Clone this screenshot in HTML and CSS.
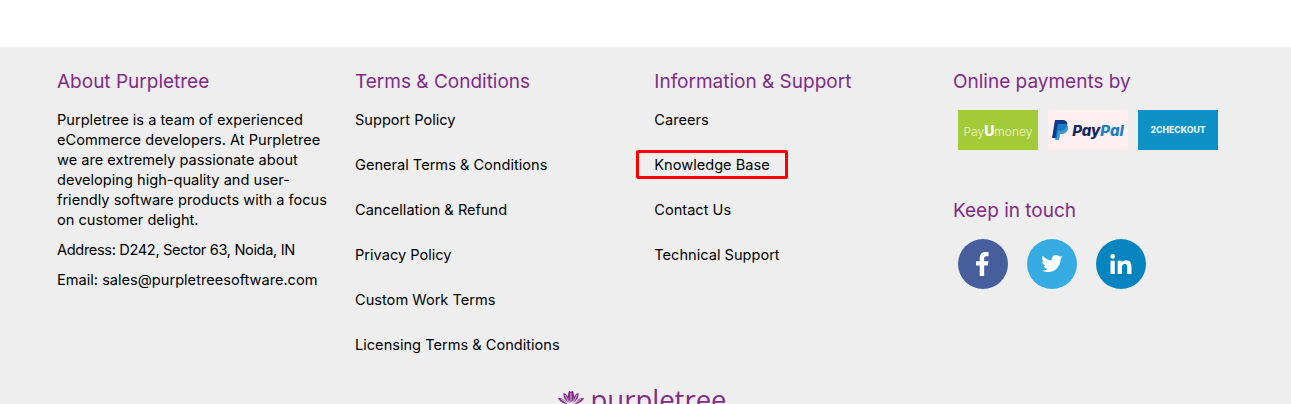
FILE: index.html
```html
<!DOCTYPE html>
<html>
<head>
  <meta charset="utf-8">
  <meta name="viewport" content="width=device-width">
  <title>Purpletree footer</title>
  <link rel="stylesheet" href="styles.css">
</head>
<body>
  <div class="top-gap"></div>
  <footer class="footer">
    <div class="columns">
      <div class="col">
        <h4 class="col-title">About Purpletree</h4>
        <p class="about">Purpletree is a team of experienced eCommerce developers. At Purpletree we are extremely passionate about developing high-quality and user-friendly software products with a focus on customer delight.</p>
        <p class="about address">Address: D242, Sector 63, Noida, IN</p>
        <p class="about">Email: sales@purpletreesoftware.com</p>
      </div>
      <div class="col">
        <h4 class="col-title">Terms &amp; Conditions</h4>
        <ul class="links">
          <li><a href="#">Support Policy</a></li>
          <li><a href="#">General Terms &amp; Conditions</a></li>
          <li><a href="#">Cancellation &amp; Refund</a></li>
          <li><a href="#">Privacy Policy</a></li>
          <li><a href="#">Custom Work Terms</a></li>
          <li><a href="#">Licensing Terms &amp; Conditions</a></li>
        </ul>
      </div>
      <div class="col">
        <h4 class="col-title">Information &amp; Support</h4>
        <ul class="links">
          <li><a href="#">Careers</a></li>
          <li><a href="#" class="marked">Knowledge Base</a></li>
          <li><a href="#">Contact Us</a></li>
          <li><a href="#">Technical Support</a></li>
        </ul>
      </div>
      <div class="col">
        <h4 class="col-title">Online payments by</h4>
        <div class="pay-row">
          <div class="pay pay-payu"><span>Pay<b>U</b>money</span></div>
          <div class="pay pay-paypal">
            <svg width="17" height="20" viewBox="0 0 17 20"><path fill="#0a3a8c" d="M3 0h7c4 0 6 2 5 5.500C14 9.500 11 11 8 11H6l-1 7H0z"/><path fill="#1b8ad0" opacity=".85" d="M6 4h6c3 0 4.500 2 4 5-.7 3.500-3.500 5-6 5H8l-1 6H3z"/></svg>
            <span><i class="pp-dark">Pay</i><i class="pp-light">Pal</i></span>
          </div>
          <div class="pay pay-2co"><span>2CHECKOUT</span></div>
        </div>
        <h4 class="col-title touch-title">Keep in touch</h4>
        <div class="social-row">
          <a href="#" class="social fb">
            <svg width="13" height="24" viewBox="0 0 14 26"><path fill="#fff" d="M4 26V14.500H0V10h4V6.500C4 2.500 6.400 0 10 0c1.700 0 3 .1 3.500.2v4.300h-2.400c-1.900 0-2.300.9-2.300 2.300V10h4.600l-.6 4.500h-4V26z"/></svg>
          </a>
          <a href="#" class="social tw">
            <svg width="22" height="18" viewBox="0 0 24 20"><path fill="#fff" d="M24 2.400c-.9.400-1.800.7-2.800.8 1-.6 1.800-1.600 2.200-2.700-1 .6-2 1-3.100 1.200C19.300.7 18 0 16.500 0c-2.700 0-4.900 2.200-4.900 4.900 0 .4 0 .8.100 1.100C7.600 5.800 4 3.900 1.700.9c-.4.700-.7 1.600-.7 2.500 0 1.700.9 3.200 2.200 4.100-.8 0-1.600-.2-2.200-.6v.1c0 2.400 1.700 4.400 3.900 4.800-.4.100-.8.200-1.300.2-.3 0-.6 0-.9-.1.600 2 2.400 3.400 4.600 3.400-1.700 1.300-3.800 2.100-6.100 2.100-.4 0-.8 0-1.200-.1C2.200 18.200 4.800 19 7.500 19c9.100 0 14-7.500 14-14v-.6c1-.7 1.800-1.500 2.500-2z"/></svg>
          </a>
          <a href="#" class="social in">
            <svg width="22" height="20" viewBox="0 0 22 21"><path fill="#fff" d="M0 7h4.500v14H0zM2.250 0a2.500 2.500 0 1 1 0 5 2.500 2.500 0 0 1 0-5zM7.500 7h4.300v1.900c.7-1.200 2.300-2.300 4.600-2.300 4.500 0 5.600 2.900 5.600 6.900V21h-4.500v-6.600c0-1.800-.1-3.900-2.500-3.900s-3 1.900-3 3.800V21H7.500z"/></svg>
          </a>
        </div>
      </div>
    </div>
    <div class="brand">
      <svg class="brand-mark" width="28" height="20" viewBox="0 0 28 20"><g fill="#812b87"><path d="M14 13C11 10 10 6 12 1c1 0 1.500.5 2 1 .5-.5 1-1 2-1 2 5 1 9-2 12z"/><path d="M12.500 13C8 11 6 7 6.500 3 9 3.500 10 5 11 7c.3 2 .8 4 1.500 6zM15.500 13c4.500-2 6.500-6 6-10-2.500.5-3.500 2-4.500 4-.3 2-.8 4-1.500 6z"/><path d="M11 14C7 14 3 12 1 8c3-.5 5 .5 7 3zM17 14c4 0 8-2 10-6-3-.5-5 .5-7 3z"/><path d="M10 15c-3 2-7 2-10 0 3-1.500 7-1.500 10 0zM18 15c3 2 7 2 10 0-3-1.500-7-1.500-10 0z"/></g><g fill="none" stroke="#eee" stroke-width=".8"><path d="M14 13V3M12 13 8 5M16 13l4-8M11 14 4 9M17 14l7-5"/></g></svg>
      <span class="brand-name">purpletree</span>
    </div>
  </footer>
</body>
</html>
```

FILE: styles.css
```css
html, body {
  margin: 0;
  height: 404px;
  overflow: hidden;
  background: #fff;
}

body {
  font-family: "Inter", "Open Sans", sans-serif;
  font-size: 14.6px;
  color: #000;
}

.top-gap {
  height: 47px;
}

.footer {
  background: #eee;
  padding: 20px 40px 0 57px;
  height: 400px;
}

.columns {
  display: grid;
  grid-template-columns: 298px 299.3px 298.7px 298.7px;
}

.col {
  padding-right: 24px;
}

.col-title {
  margin: 0;
  height: 28px;
  line-height: 30px;
  font-size: 19px;
  font-weight: 400;
  color: #812b87;
}

.about {
  margin: 0 0 10px;
  line-height: 20px;
}

.col .about:first-of-type {
  margin-top: 15px;
}

.address {
  letter-spacing: -.35px;
}

.links {
  list-style: none;
  margin: 15px 0 0;
  padding: 0;
  display: flex;
  flex-direction: column;
  gap: 25px;
}

.links li {
  line-height: 20px;
}

.links a {
  color: #000;
  text-decoration: none;
  position: relative;
}

.marked::after {
  content: "";
  position: absolute;
  left: -18px;
  right: -18px;
  top: -6px;
  bottom: -5px;
  border: 3px solid #f00;
  border-radius: 2px;
}

.pay-row {
  display: flex;
  gap: 10px;
  margin: 15px 0 0 5px;
}

.pay {
  width: 80px;
  height: 40px;
  display: flex;
  align-items: center;
  justify-content: center;
  flex: none;
}

.pay-payu {
  background: #a3cb38;
  color: #eef6cf;
  font-size: 12px;
  font-weight: 300;
}

.pay-payu b {
  color: #fff;
  font-size: 14px;
  font-weight: 800;
}

.pay-paypal {
  background: #fdeef0;
  gap: 3px;
  font-size: 15px;
  font-weight: 800;
}

.pay-paypal i {
  font-style: italic;
}

.pp-dark {
  color: #16295f;
}

.pp-light {
  color: #1b7fc4;
}

.pay-2co {
  background: #0d91c4;
  color: #e4f3f9;
  font-size: 8.700px;
  font-weight: 800;
}

.touch-title {
  margin-top: 46px;
}

.social-row {
  display: flex;
  gap: 19px;
  margin: 15px 0 0 5px;
}

.social {
  width: 50px;
  height: 50px;
  border-radius: 50%;
  display: flex;
  align-items: center;
  justify-content: center;
}

.fb {
  background: #465f9c;
}

.tw {
  background: #35abe2;
}

.in {
  background: #0684c0;
}

.brand {
  display: flex;
  align-items: flex-start;
  justify-content: center;
  gap: 5px;
  margin: 27px 0 0 -24px;
}

.brand-mark {
  margin-top: 8px;
}

.brand-name {
  font-family: "Open Sans", sans-serif;
  font-size: 27.500px;
  line-height: 36px;
  color: #812b87;
}
```
